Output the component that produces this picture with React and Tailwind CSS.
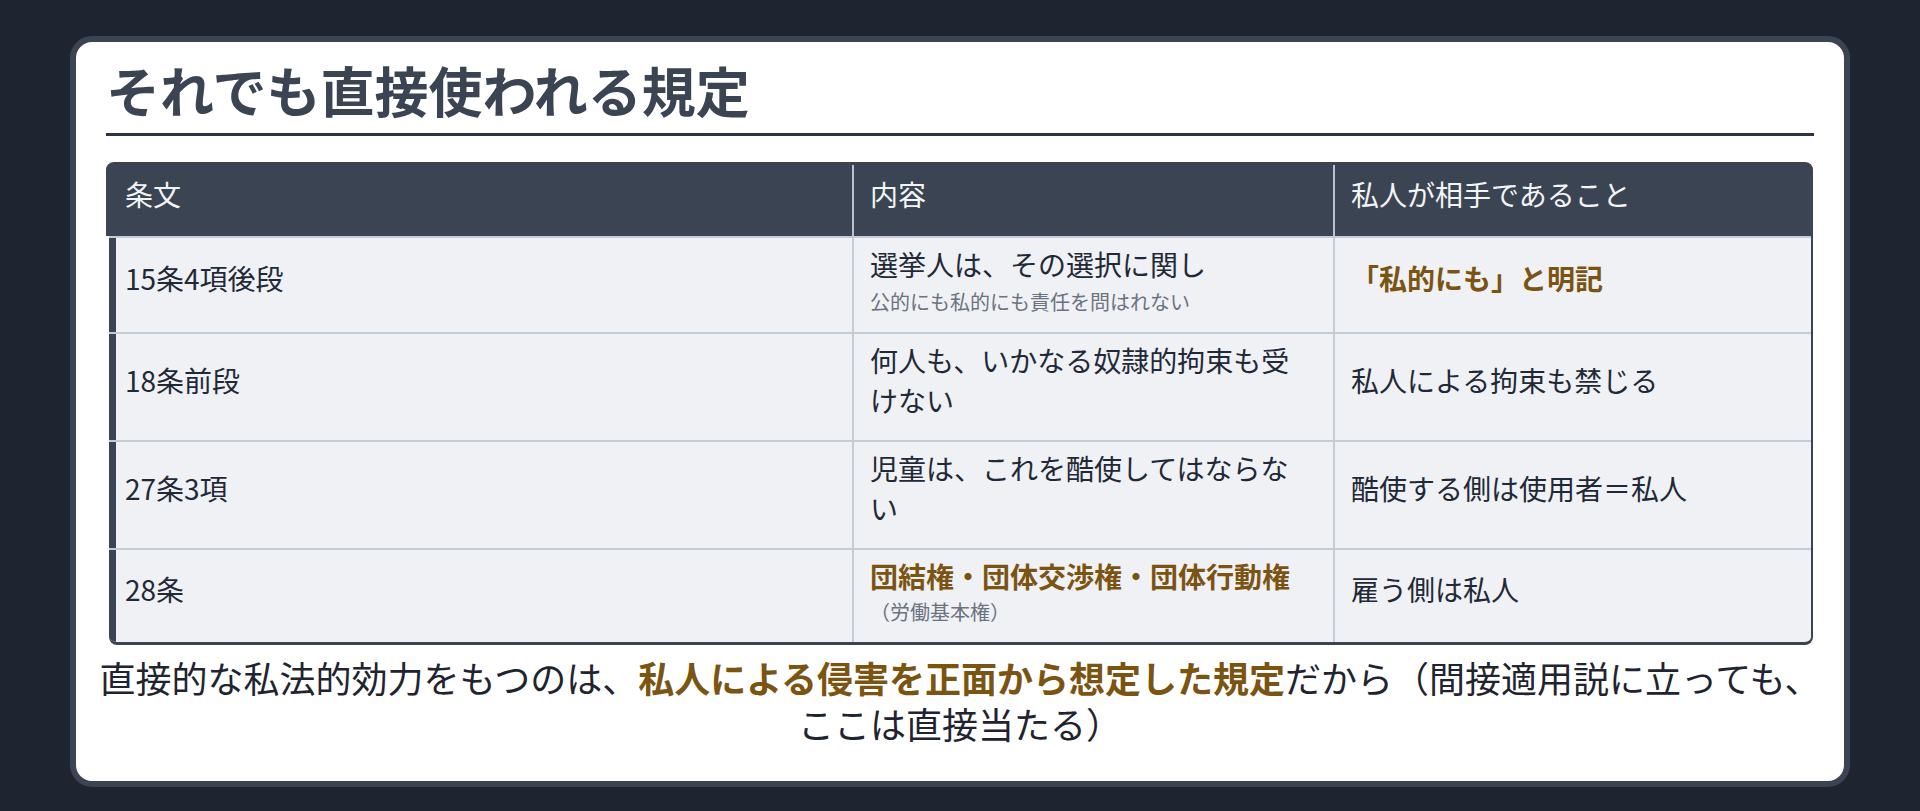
import React from "react";

const rows = [
  {
    article: "15条4項後段",
    content: (
      <div className="flex flex-col">
        <span className="leading-[40px]">選挙人は、その選択に関し</span>
        <span className="mt-[8px] text-[20px] leading-[20px] text-[#6b7280]">
          公的にも私的にも責任を問はれない
        </span>
      </div>
    ),
    target: (
      <span className="font-bold text-[#7b5411]">「私的にも」と明記</span>
    ),
  },
  {
    article: "18条前段",
    content: <span>何人も、いかなる奴隷的拘束も受けない</span>,
    target: <span>私人による拘束も禁じる</span>,
  },
  {
    article: "27条3項",
    content: <span>児童は、これを酷使してはならない</span>,
    target: <span>酷使する側は使用者＝私人</span>,
  },
  {
    article: "28条",
    content: (
      <div className="flex flex-col">
        <span className="font-bold text-[#7b5411] leading-[40px]">
          団結権・団体交渉権・団体行動権
        </span>
        <span className="mt-[6px] text-[20px] leading-[20px] text-[#6b7280]">
          （労働基本権）
        </span>
      </div>
    ),
    target: <span>雇う側は私人</span>,
  },
];

const App = () => {
  return (
    <div
      className="w-[1920px] h-[811px] bg-[#1e2530] pt-[36px] px-[70px]"
      style={{ fontFamily: '"Noto Sans CJK JP", "Noto Sans", sans-serif' }}
    >
      <div className="h-[751px] bg-white border-[6px] border-[#3b4452] rounded-[22px] box-border">
        <div className="mx-[30px] pt-[16px] pb-[11px] border-b-[3px] border-[#2d3441]">
          <h1 className="text-[54px] leading-[64px] font-bold text-[#3b4452]">
            それでも直接使われる規定
          </h1>
        </div>

        <div className="ml-[30px] mr-[31px] mt-[26px] text-[28px] leading-[40px] text-[#1f2937]">
          <div className="grid grid-cols-[746px_481px_1fr] bg-[#3b4452] rounded-t-[8px] border-t-[3px] border-[#3b4452] text-[#f3f4f6]">
            <div className="pl-[19px] pt-[9px] pb-[22px]">条文</div>
            <div className="pl-[16px] pt-[9px] pb-[22px] border-l-2 border-[#b8c2cf]">
              内容
            </div>
            <div className="pl-[16px] pt-[9px] pb-[22px] border-l-2 border-[#b8c2cf]">
              私人が相手であること
            </div>
          </div>

          <div className="ml-[3px] bg-[#eff1f5] border-r-2 border-b-[3px] border-[#3b4452] rounded-b-[8px] overflow-hidden">
            {rows.map((row) => (
              <div
                key={row.article}
                className="grid grid-cols-[743px_481px_1fr] border-t-2 border-[#c4ccd6]"
              >
                <div className="flex items-center min-w-0 pl-[9px] pt-[6px] pb-[20px] border-l-[7px] border-[#3b4452]">
                  <span>{row.article}</span>
                </div>
                <div className="flex items-center min-w-0 pl-[16px] pr-[24px] pt-[6px] pb-[20px] border-l-2 border-[#c4ccd6]">
                  {row.content}
                </div>
                <div className="flex items-center min-w-0 pl-[16px] pr-[16px] pt-[6px] pb-[20px] border-l-2 border-[#c4ccd6]">
                  {row.target}
                </div>
              </div>
            ))}
          </div>
        </div>

        <p className="mx-[14px] mt-[9px] text-center text-[36px] leading-[46px] text-[#1f2430]">
          直接的な私法的効力をもつのは、
          <span className="font-bold text-[#7b5411]">
            私人による侵害を正面から想定した規定
          </span>
          だから（間接適用説に立っても、ここは直接当たる）
        </p>
      </div>
    </div>
  );
};

export default App;
